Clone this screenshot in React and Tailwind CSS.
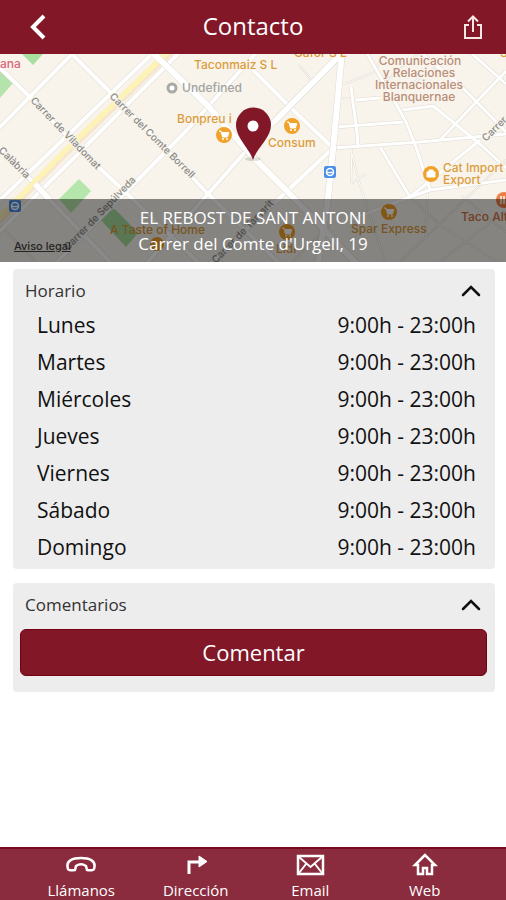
import React, { useState } from "react";

const hours = [
  { day: "Lunes", time: "9:00h - 23:00h" },
  { day: "Martes", time: "9:00h - 23:00h" },
  { day: "Miércoles", time: "9:00h - 23:00h" },
  { day: "Jueves", time: "9:00h - 23:00h" },
  { day: "Viernes", time: "9:00h - 23:00h" },
  { day: "Sábado", time: "9:00h - 23:00h" },
  { day: "Domingo", time: "9:00h - 23:00h" },
];

const wideRoads = [
  "M0 68 L30 97 L80 150 L120 187 L200 264",
  "M70 52 L110 92 L165 148 L206 192 L280 264",
  "M253 70 L290 107 L333 148",
  "M0 147 L43 193 L112 264",
  "M-2 129 L74 52",
  "M-2 202 L73 130 L154 52",
  "M-2 233 L82 150 L180 52",
  "M55 264 L187 130 L257 52",
  "M146 264 L253 143 L273 123 L342 52",
  "M210 264 L253 223 L333 148",
];

const mainRoads = [
  "M152 52 L207 105 L253 157 L286 190 L357 264",
  "M342 52 L333 150 L328 198 L318 264",
  "M273 123 L340 55",
  "M35 184 L50 200",
];

const smallRoads = [
  "M333 148 L420 142 L506 134",
  "M336 127 L403 122",
  "M356 100 L380 98",
  "M351 87 L357 133 L358 146",
  "M366 52 L391 95 L406 122 L416 147 L430 190",
  "M403 110 L433 106 L480 144 L506 168",
  "M506 71 L440 140",
  "M420 52 L460 85 L506 132",
  "M380 147 L410 197",
  "M350 220 L410 197 L430 190 L506 180",
  "M480 140 L410 197",
  "M470 52 L506 84",
];

const thinRoads = [
  "M350 147 L360 185 L386 264",
  "M299 65 L313 82",
  "M345 84 L375 72 L380 60",
  "M342 98 L352 98",
  "M351 184 L366 174",
  "M351 184 L352 147",
  "M403 90 L440 64",
  "M380 86 L420 52",
  "M290 264 L330 225",
  "M0 225 L38 264",
  "M428 190 L425 240",
  "M400 262 L506 160",
  "M440 262 L506 210",
  "M462 196 L506 232",
  "M410 197 L440 225 L500 264",
];

const CartPin = ({ x, y }) => (
  <g transform={`translate(${x} ${y})`}>
    <circle r="8" fill="#f0a22a" />
    <path d="M-5 -4 h2 l1.5 6 h5 l1.2 -4.5 h-7.4" fill="#fff" stroke="#fff" strokeWidth="1" />
    <circle cx="-1" cy="4" r="1" fill="#fff" />
    <circle cx="3" cy="4" r="1" fill="#fff" />
  </g>
);

const MetroPin = ({ x, y }) => (
  <g transform={`translate(${x} ${y})`}>
    <rect x="-6" y="-6" width="12" height="12" rx="2" fill="#4a8fe8" />
    <circle r="3.5" fill="none" stroke="#fff" strokeWidth="1.5" />
    <path d="M-3 0.5 h6" stroke="#fff" strokeWidth="1.5" />
  </g>
);

const Roads = ({ paths, width, edge }) => (
  <g fill="none" strokeLinejoin="round">
    {paths.map((d) => (
      <path key={`e${d}`} d={d} stroke="#dedbd3" strokeWidth={edge} />
    ))}
    {paths.map((d) => (
      <path key={d} d={d} stroke="#ffffff" strokeWidth={width} />
    ))}
  </g>
);

const StreetMap = () => (
  <svg
    className="absolute inset-0 h-full w-full font-['Inter',sans-serif] text-[12px] font-medium"
    viewBox="0 54 506 208"
    preserveAspectRatio="xMidYMid slice"
    role="img"
    aria-label="Mapa"
  >
    <rect y="54" width="506" height="208" fill="#f8f4ec" />
    <path d="M22 54 L33 65 L43 54 Z" fill="#a9dfa0" />
    <path d="M0 70 L14 82 L0 98 Z" fill="#b5e3ac" />
    <path d="M79 179 L91 191 L71 213 L59 199 Z" fill="#b5e6ab" />
    <path d="M108 207 L116 210 L138 233 L126 247 L100 219 Z" fill="#a5dc9d" />
    <Roads paths={thinRoads} width={1} edge={2} />
    <Roads paths={smallRoads} width={3} edge={4} />
    <Roads paths={wideRoads} width={4} edge={5} />
    <path d="M-2 221 L68 150 L170 52" fill="none" stroke="#f7e6cf" strokeWidth="8" />
    <path d="M-2 219 L66 150 L168 52" fill="none" stroke="#fdf3b4" strokeWidth="5" />
    <Roads paths={mainRoads} width={6} edge={7} />

    <g fill="#8b8b88" stroke="#f8f4ec" strokeWidth="2" paintOrder="stroke" fontSize="10">
      <text transform="translate(30 101) rotate(46)">Carrer de Viladomat</text>
      <text transform="translate(109 97) rotate(45)">Carrer del Comte Borrell</text>
      <text transform="translate(-8 145) rotate(45)">e Calàbria</text>
      <text transform="translate(68 251) rotate(-46)">Carrer de Sepúlveda</text>
      <text transform="translate(486 142) rotate(-45)">Carrer</text>
    </g>
    <text transform="translate(216 264) rotate(-46)" fill="#8b8b88" fontSize="10">
      Carrer de Tamarit
    </text>

    <g fill="#dc9c3c" stroke="#f8f4ec" strokeWidth="2" paintOrder="stroke">
      <text x="294" y="57">Cafor S L</text>
      <text x="500" y="57">S</text>
      <text x="194" y="69">Taconmaiz S L</text>
      <text x="177" y="123">Bonpreu i</text>
      <text x="268" y="147">Consum</text>
      <text x="443" y="172">Cat Import</text>
      <text x="443" y="184">Export</text>
    </g>
    <g fill="#dc9c3c">
      <text x="110" y="234">A Taste of Home</text>
      <text x="351" y="233">Spar Express</text>
      <text x="276" y="253">Lidl</text>
    </g>
    <g fill="#b98e78" stroke="#f8f4ec" strokeWidth="2" paintOrder="stroke" textAnchor="middle">
      <text x="420" y="65">Comunicación</text>
      <text x="419" y="77">y Relaciones</text>
      <text x="419" y="89">Internacionales</text>
      <text x="419" y="101">Blanquernae</text>
    </g>
    <text x="461" y="221" fill="#d07045">Taco Alto</text>
    <text x="0" y="68" fill="#dc6680">ana</text>
    <text x="182" y="92" fill="#a3a3a0">Undefined</text>
    <circle cx="172" cy="88" r="4" fill="#fff" stroke="#a9a9a6" strokeWidth="3" />

    <CartPin x={224} y={135} />
    <CartPin x={292} y={126} />
    <CartPin x={389} y={212} />
    <CartPin x={287} y={232} />
    <circle cx="157" cy="244" r="7" fill="#f0a22a" />
    <circle cx="431" cy="174" r="8" fill="#f0a22a" />
    <path d="M427 172 h8 v5 h-8 Z M429 172 v-2 h4 v2" fill="#fff" stroke="#fff" />
    <circle cx="504" cy="200" r="8" fill="#ec7f45" />
    <path d="M501 196 v8 M504 196 v8" stroke="#fff" strokeWidth="1.5" />
    <MetroPin x={330} y={172} />
    <MetroPin x={15} y={206} />

    {/* shop location */}
    <ellipse cx="253" cy="159" rx="8" ry="2" fill="#000" opacity="0.12" />
    <path
      d="M253 160 C250 149 236 138 236 125 A17.5 17.5 0 0 1 271 125 C271 138 256 149 253 160 Z"
      fill="#811727"
    />
    <circle cx="253" cy="126" r="5.5" fill="#fff" />
  </svg>
);

const Panel = ({ title, children }) => {
  const [open, setOpen] = useState(true);
  return (
    <section className="rounded-sm bg-[#ededed] pr-2 pl-[7px]">
      <h2>
        <button
          type="button"
          aria-expanded={open}
          onClick={() => setOpen(!open)}
          className="flex h-[37px] w-full items-center justify-between pt-1.5 pr-1 pl-[5px] text-[17px] text-[#333]"
        >
          {title}
          <svg className="h-5 w-6" viewBox="0 0 24 20" fill="none" stroke="#111" strokeWidth="2.5">
            <path d="M4 14 L12 6 L20 14" strokeLinecap="round" />
          </svg>
        </button>
      </h2>
      {open && children}
    </section>
  );
};

const links = [
  {
    label: "Llámanos",
    href: "#llamanos",
    icon: (
      <path d="M3 17 C0 8 9 6 16 6 C23 6 32 8 29 17 Q28 19 22 18 L21 14 C18 12 14 12 11 14 L10 18 Q4 19 3 17 Z" />
    ),
  },
  {
    label: "Dirección",
    href: "#direccion",
    icon: (
      <>
        <path d="M9 22 V10 H19" strokeWidth="3" />
        <path d="M19 4 L27 9.5 L19 15 Z" fill="#fff" strokeWidth="1" />
      </>
    ),
  },
  {
    label: "Email",
    href: "#email",
    icon: (
      <>
        <rect x="4" y="4" width="25" height="18" />
        <path d="M5 5 L16.5 15 L28 5 M5 21 L12 12 M28 21 L21 12" strokeWidth="2" />
      </>
    ),
  },
  {
    label: "Web",
    href: "#web",
    icon: <path d="M16 3 L6 13 H9 V22 H14 V16 H18 V22 H23 V13 H26 Z" />,
  },
];

const App = () => {
  return (
    <div className="flex min-h-screen w-full flex-col bg-white font-['Open_Sans','Noto_Sans',sans-serif]">
      <header className="flex h-[54px] items-center justify-between bg-[#811727] px-5 text-white">
        <button type="button" aria-label="Volver" className="flex w-9 justify-center">
          <svg width="20" height="28" viewBox="0 0 20 28" fill="none" stroke="#fff" strokeWidth="4">
            <path d="M16 3 L5 14 L16 25" />
          </svg>
        </button>
        <h1 className="pb-0.5 text-[24px] leading-[30px]">Contacto</h1>
        <button type="button" aria-label="Compartir" className="flex w-9 justify-end">
          <svg width="26" height="28" viewBox="0 0 26 28" fill="none" stroke="#f6e6e6" strokeWidth="2">
            <path d="M9 12 H5 V25 H21 V12 H17" />
            <path d="M13 19 V4 M8 8.5 L13 3.5 L18 8.5" />
          </svg>
        </button>
      </header>

      <section className="relative flex h-[208px] flex-col justify-end overflow-hidden">
        <StreetMap />
        <a href="#legal" className="absolute bottom-2 left-3.5 font-['Inter',sans-serif] text-[11px] font-medium text-[#444] underline">
          Aviso legal
        </a>
        <div className="relative flex h-[63px] flex-col items-center justify-center bg-black/46 text-[17px] leading-[26px] text-white">
          <p>EL REBOST DE SANT ANTONI</p>
          <p>Carrer del Comte d'Urgell, 19</p>
        </div>
      </section>

      <main className="flex flex-col gap-3.5 pt-[7px] pr-[11px] pl-[13px]">
        <Panel title="Horario">
          <table className="mb-1 w-full text-[21px] leading-[30px] text-[#111]">
            <tbody>
              {hours.map((h) => (
                <tr key={h.day} className="h-[37px]">
                  <th scope="row" className="pl-[17px] text-left font-normal">
                    {h.day}
                  </th>
                  <td className="pr-[11px] text-right">{h.time}</td>
                </tr>
              ))}
            </tbody>
          </table>
        </Panel>
        <Panel title="Comentarios">
          <div className="pt-[9px] pb-4">
            <button
              type="button"
              className="h-[47px] w-full rounded-md border border-[#74000f] bg-[#811727] text-[22px] text-white"
            >
              Comentar
            </button>
          </div>
        </Panel>
      </main>

      <nav className="mt-auto flex h-[53px] justify-around border-t-2 border-[#7a0820] bg-[#8a2c3d] px-6 text-white">
        {links.map((l) => (
          <a key={l.label} href={l.href} className="flex flex-1 flex-col items-center pt-0.5 text-[15px] leading-[22px]">
            <svg className="h-[28px] w-8 shrink-0" viewBox="0 0 32 26" fill="none" stroke="#fff" strokeWidth="2.5">
              {l.icon}
            </svg>
            {l.label}
          </a>
        ))}
      </nav>
    </div>
  );
};

export default App;
